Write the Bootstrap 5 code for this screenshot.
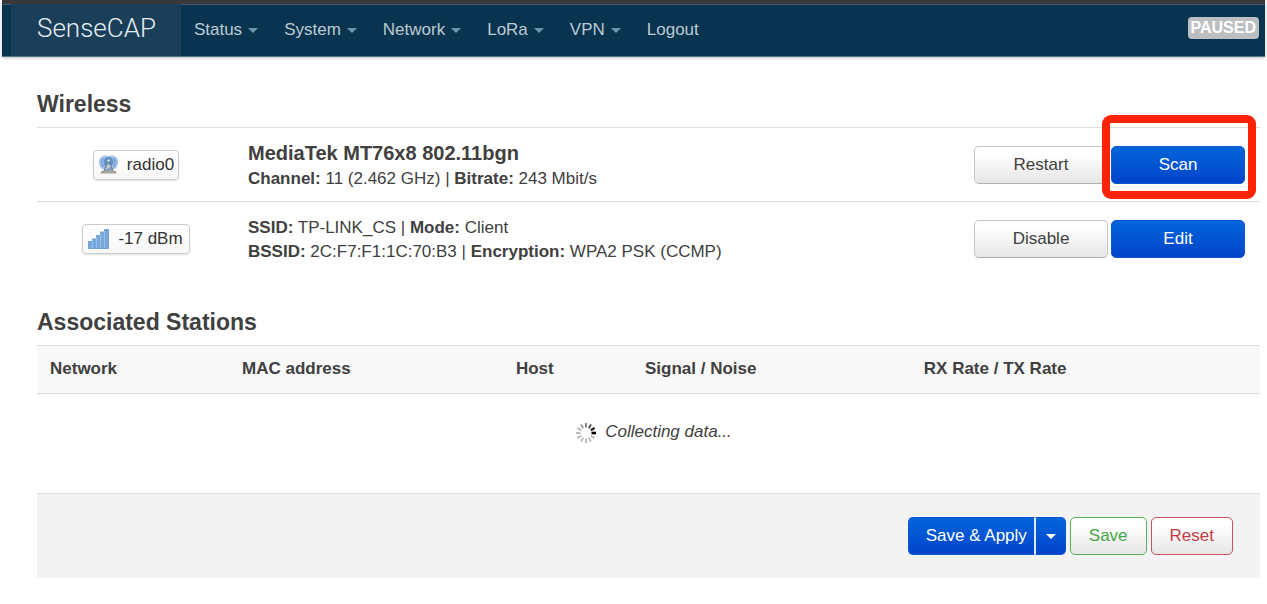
<!DOCTYPE html>
<html lang="en">
<head>
<meta charset="utf-8">
<meta name="viewport" content="width=device-width, initial-scale=1">
<title>SenseCAP - Wireless</title>
<link href="https://cdn.jsdelivr.net/npm/bootstrap@5.3.0/dist/css/bootstrap.min.css" rel="stylesheet">
<style>
body { font-family: "Liberation Sans", Arial, sans-serif; font-size: 17px; line-height: 24px; color: #404040; background: #fff; }
.topbar { margin: 0 2px; padding: 0 6px 0 9px; background: #08344f; border-top: 4px solid #383838; border-bottom: 1px solid #53758b; box-shadow: inset 0 1px #41586a, 0 1px 3px rgba(0,0,0,.25); }
.topbar .navbar-brand { margin: 0 13px 0 0; padding: 8px 25px 12px 26px; font-family: Roboto, "Liberation Sans", sans-serif; font-weight: 300; font-size: 26px; line-height: 32px; color: #e3edf3; background: #1c3f59; }
.topbar .navbar-nav { gap: 26px; }
.topbar .navbar-nav .nav-link { color: #bccad3; padding: 14px 0; }
.topbar .dropdown-toggle::after { margin-left: 6px; border-top: 5px solid #7197ae; border-left: 5px solid transparent; border-right: 5px solid transparent; vertical-align: 2px; }
.paused { background: #bcbfc1; color: #fff; font-size: 16px; line-height: 22px; padding: 0 3px; border-radius: 4px; margin-bottom: 4px; }
.page-body { padding: 33px 7px 26px 35px; margin-left: 2px; }
h3 { font-size: 23px; line-height: 28px; font-weight: 700; margin: 0 0 9px; }
.cbi { color: inherit; margin: 0; border-top: 1px solid #ddd; }
.cbi > * > tr > * { color: inherit; background: none; padding: 0 13px; vertical-align: middle; border: 0; }
.wifi td { height: 74px; }
.wifi tr + tr td { border-top: 1px solid #ddd; }
.wifi td.act { padding-right: 15px; }
.wifi td.info { padding-top: 2px; }
.dev { font-size: 20px; }
.ifacebadge { display: inline-flex; align-items: center; vertical-align: middle; gap: 8px; height: 30px; padding: 0 4px; border: 1px solid #ccc; border-radius: 4px; background: linear-gradient(#fff, #f7f7f7); box-shadow: 0 1px 2px rgba(0,0,0,.12); white-space: nowrap; color: #333; }
.ifacebadge.signal { padding: 0 6px 0 5px; }
.cbi-btn { font-size: 17px; line-height: 24px; padding: 6px 13px; border: 1px solid #c6c6c6; border-bottom-color: #b0b0b0; border-radius: 5px; color: #404040; background: linear-gradient(#fff 20%, #e6e6e6); }
.act .d-flex { gap: 3px; }
.act .cbi-btn { width: 134px; }
.cbi-btn.primary, .cbi-btn.primary:hover { color: #fff; background: linear-gradient(#0565d9, #0044cc); border-color: #0a58d0; }
.cbi-btn.save { color: #46a546; border-color: #55b25b; padding: 6px 18px; }
.cbi-btn.reset { color: #c43c45; border-color: #cb5260; padding: 6px 18px; }
.cbi-btn.apply { padding: 5px 8px 5px 17px; border-right: 0; }
.cbi-btn.more { padding: 5px 9px 5px 10px; border-left: 2px solid #dce9fb; }
.cbi-btn.more::after { margin: 0; border-top: 5px solid #fff; border-left: 5px solid transparent; border-right: 5px solid transparent; vertical-align: 2px; }
.highlight { position: absolute; inset: -31px -11px -15px -9px; border: 8px solid #ff2305; border-radius: 9px; pointer-events: none; }
.stations { table-layout: fixed; }
.stations thead th { height: 48px; background: #f8f8f8; border-bottom: 1px solid #ddd; font-weight: 700; }
.stations tbody td { height: 78px; padding-left: 23px; }
.actions { background: #f3f3f3; border-top: 1px solid #ddd; margin-top: 22px; padding: 23px 27px; }
</style>
</head>
<body>
<header class="topbar navbar navbar-expand">
  <a class="navbar-brand" href="#">SenseCAP</a>
  <nav class="navbar-nav me-auto">
    <a class="nav-link dropdown-toggle" href="#" role="button">Status</a>
    <a class="nav-link dropdown-toggle" href="#" role="button">System</a>
    <a class="nav-link dropdown-toggle" href="#" role="button">Network</a>
    <a class="nav-link dropdown-toggle" href="#" role="button">LoRa</a>
    <a class="nav-link dropdown-toggle" href="#" role="button">VPN</a>
    <a class="nav-link" href="#">Logout</a>
  </nav>
  <span class="paused fw-bold">PAUSED</span>
</header>

<main class="page-body">
  <section>
    <h3>Wireless</h3>
    <table class="table cbi wifi">
      <colgroup><col style="width:198px"><col><col style="width:300px"></colgroup>
      <tbody>
      <tr>
        <td class="text-center">
          <span class="ifacebadge">
            <svg width="21" height="21" viewBox="0 0 21 21" aria-hidden="true">
              <path d="M5 2C0 4-.5 10 4 15h13c4.500-5 4-11-1-13-2-1-3.500 0-5.500 0S7 1 5 2z" fill="#a3c4e8"/>
              <path d="M5.500 4C3 6 3 10 5.500 13M15.500 4c2.500 2 2.500 6 0 9" fill="none" stroke="#7eaadb" stroke-width="2"/>
              <circle cx="10.500" cy="8" r="5" fill="#5f93cc"/>
              <path d="M10.500 5 6 17h9z" fill="#8ba6bd" stroke="#5d7890"/>
              <path d="M8.500 12h4M7.500 15l5-3" fill="none" stroke="#dbe4ea"/>
              <circle cx="10.500" cy="6.500" r="1.700" fill="#e8f1f8" stroke="#5d7890"/>
              <path d="M4 16.500h13l2 3H2z" fill="#aaa69f"/>
            </svg>radio0</span>
        </td>
        <td class="info"><strong class="dev">MediaTek MT76x8 802.11bgn</strong><br><strong>Channel:</strong> 11 (2.462 GHz) | <strong>Bitrate:</strong> 243 Mbit/s</td>
        <td class="act">
          <div class="d-flex justify-content-end">
            <button type="button" class="btn cbi-btn">Restart</button>
            <div class="position-relative"><button type="button" class="btn cbi-btn primary">Scan</button><span class="highlight"></span></div>
          </div>
        </td>
      </tr>
      <tr>
        <td class="text-center">
          <span class="ifacebadge signal">
            <svg width="22" height="21" viewBox="0 0 22 21" aria-hidden="true">
              <path d="M.5 20.500v-7h4v-2.500h4V7.500h4v-3.500h4V1.500h4v19z" fill="#78a8dc" stroke="#6fa0d8"/>
              <path d="M4.500 12v8M8.500 9v11M12.500 6v14M16.500 3v17" stroke="#98bde6"/>
            </svg>-17 dBm</span>
        </td>
        <td class="info"><strong>SSID:</strong> TP-LINK_CS | <strong>Mode:</strong> Client<br><strong>BSSID:</strong> 2C:F7:F1:1C:70:B3 | <strong>Encryption:</strong> WPA2 PSK (CCMP)</td>
        <td class="act">
          <div class="d-flex justify-content-end">
            <button type="button" class="btn cbi-btn">Disable</button>
            <button type="button" class="btn cbi-btn primary">Edit</button>
          </div>
        </td>
      </tr>
      </tbody>
    </table>
  </section>

  <section class="pt-4 mt-2">
    <h3>Associated Stations</h3>
    <table class="table cbi stations">
      <colgroup><col style="width:15.7%"><col style="width:22.4%"><col style="width:10.55%"><col style="width:22.8%"><col></colgroup>
      <thead><tr><th>Network</th><th>MAC address</th><th>Host</th><th>Signal / Noise</th><th>RX Rate / TX Rate</th></tr></thead>
      <tbody><tr><td colspan="5" class="text-center">
        <svg class="me-2" width="22" height="22" viewBox="-11 -11 22 22" stroke-width="1.800" aria-hidden="true">
          <g stroke="#b5b5b5"><path d="M0-5.500V-10" transform="rotate(120)"/><path d="M0-5.500V-10" transform="rotate(150)"/><path d="M0-5.500V-10" transform="rotate(180)"/><path d="M0-5.500V-10" transform="rotate(210)"/><path d="M0-5.500V-10" transform="rotate(240)"/><path d="M0-5.500V-10" transform="rotate(270)"/><path d="M0-5.500V-10" transform="rotate(300)"/></g>
          <path d="M0-5.500V-10" stroke="#999" transform="rotate(330)"/>
          <path d="M0-5.500V-10" stroke="#777"/>
          <path d="M0-5.500V-10" stroke="#444" transform="rotate(30)"/>
          <path d="M0-5.500V-10" stroke="#222" stroke-width="2.300" transform="rotate(60)"/>
          <path d="M0-5.500V-10" stroke="#000" stroke-width="2.600" transform="rotate(90)"/>
        </svg><em>Collecting data...</em>
      </td></tr></tbody>
    </table>
  </section>

  <div class="actions d-flex justify-content-end">
    <div class="btn-group me-1">
      <button type="button" class="btn cbi-btn primary apply">Save &amp; Apply</button>
      <button type="button" class="btn cbi-btn primary more dropdown-toggle" aria-label="More apply options"></button>
    </div>
    <button type="button" class="btn cbi-btn save me-1">Save</button>
    <button type="button" class="btn cbi-btn reset">Reset</button>
  </div>
</main>
<script src="https://cdn.jsdelivr.net/npm/bootstrap@5.3.0/dist/js/bootstrap.bundle.min.js"></script>
</body>
</html>
